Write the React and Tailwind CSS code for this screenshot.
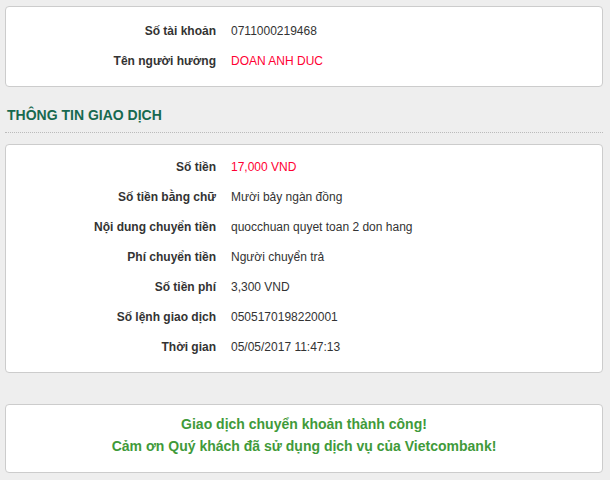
export default function App() {
  const font = { fontFamily: '"Liberation Sans", Arial, sans-serif' };
  const Row = ({ label, value, valueClass = "text-[#333]" }) => (
    <div className="flex h-[30px] items-center">
      <div className="w-[210px] shrink-0 text-right font-bold text-[12px] text-[#333]">{label}</div>
      <div className={`pl-[15px] text-[12px] ${valueClass}`}>{value}</div>
    </div>
  );
  return (
    <div className="min-h-[480px] w-[610px] bg-[#eeeeee] px-[5px] pt-[6px]" style={font}>
      <div className="w-[598px] rounded-[4px] border border-[#cccccc] bg-white pt-[9px] pb-[10px]">
        <Row label="Số tài khoản" value="0711000219468" />
        <Row label="Tên người hưởng" value="DOAN ANH DUC" valueClass="text-[#ff0033]" />
      </div>
      <div className="mt-[18px] w-[598px] border-b border-dotted border-[#bbbbbb] pb-[6px] pl-[2px] text-[14px] font-bold text-[#17694f]">
        THÔNG TIN GIAO DỊCH
      </div>
      <div className="mt-[11px] w-[598px] rounded-[4px] border border-[#cccccc] bg-white pt-[7px] pb-[10px]">
        <Row label="Số tiền" value="17,000 VND" valueClass="text-[#ff0033]" />
        <Row label="Số tiền bằng chữ" value="Mười bảy ngàn đồng" />
        <Row label="Nội dung chuyển tiền" value="quocchuan quyet toan 2 don hang" />
        <Row label="Phí chuyển tiền" value="Người chuyển trả" />
        <Row label="Số tiền phí" value="3,300 VND" />
        <Row label="Số lệnh giao dịch" value="0505170198220001" />
        <Row label="Thời gian" value="05/05/2017 11:47:13" />
      </div>
      <div className="mt-[31px] flex h-[69px] w-[598px] flex-col items-center rounded-[4px] border border-[#cccccc] bg-white pt-[8px] text-[14px] font-bold leading-[22px] text-[#3f9a3a]">
        <div>Giao dịch chuyển khoản thành công!</div>
        <div>Cảm ơn Quý khách đã sử dụng dịch vụ của Vietcombank!</div>
      </div>
    </div>
  );
}
